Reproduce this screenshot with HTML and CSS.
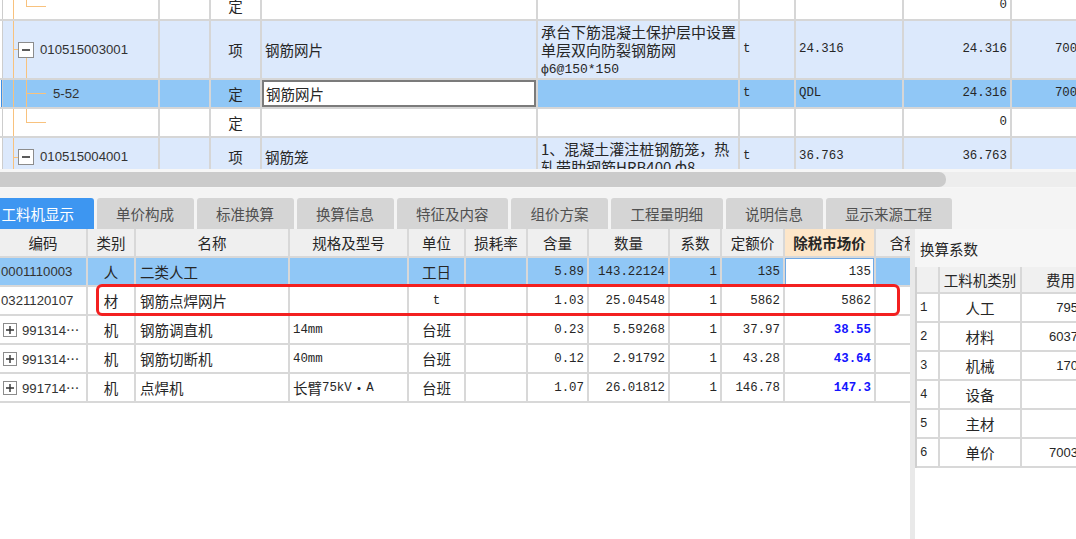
FILE: index.html
```html
<!DOCTYPE html>
<html lang="zh-CN">
<head>
<meta charset="utf-8">
<title>工料机显示</title>
<link rel="stylesheet" href="styles.css">
</head>
<body>
<div class="top-view">
  <div class="top-grid">
    <div class="trow">
      <div class="tc lead"></div>
      <div class="tc tree t-end1"></div>
      <div class="tc"></div>
      <div class="tc c">定</div>
      <div class="tc"></div>
      <div class="tc"></div>
      <div class="tc"></div>
      <div class="tc"></div>
      <div class="tc r num">0</div>
      <div class="tc"></div>
    </div>
    <div class="trow item tall">
      <div class="tc lead"></div>
      <div class="tc tree t-node">
        <svg class="box" width="16" height="16" viewBox="0 0 16 16"><rect x="0.5" y="0.5" width="15" height="15" fill="#fff" stroke="#8c8c8c"/><line x1="4" y1="8" x2="12" y2="8" stroke="#333" stroke-width="1.6"/></svg>
        <span class="code">010515003001</span>
      </div>
      <div class="tc"></div>
      <div class="tc c">项</div>
      <div class="tc">钢筋网片</div>
      <div class="tc desc">承台下筋混凝土保护层中设置<br>单层双向防裂钢筋网<br><span class="num small">ф6@150*150</span></div>
      <div class="tc num">t</div>
      <div class="tc num">24.316</div>
      <div class="tc r num">24.316</div>
      <div class="tc r num">7003.64</div>
    </div>
    <div class="trow sel">
      <div class="tc lead"></div>
      <div class="tc tree t-leaf"><span class="code">5-52</span></div>
      <div class="tc"></div>
      <div class="tc c">定</div>
      <div class="tc edit">钢筋网片</div>
      <div class="tc"></div>
      <div class="tc num">t</div>
      <div class="tc num">QDL</div>
      <div class="tc r num">24.316</div>
      <div class="tc r num">7003.64</div>
    </div>
    <div class="trow">
      <div class="tc lead"></div>
      <div class="tc tree t-last"></div>
      <div class="tc"></div>
      <div class="tc c">定</div>
      <div class="tc"></div>
      <div class="tc"></div>
      <div class="tc"></div>
      <div class="tc"></div>
      <div class="tc r num">0</div>
      <div class="tc"></div>
    </div>
    <div class="trow item mid">
      <div class="tc lead"></div>
      <div class="tc tree t-node2">
        <svg class="box" width="16" height="16" viewBox="0 0 16 16"><rect x="0.5" y="0.5" width="15" height="15" fill="#fff" stroke="#8c8c8c"/><line x1="4" y1="8" x2="12" y2="8" stroke="#333" stroke-width="1.6"/></svg>
        <span class="code">010515004001</span>
      </div>
      <div class="tc"></div>
      <div class="tc c">项</div>
      <div class="tc">钢筋笼</div>
      <div class="tc desc">1、混凝土灌注桩钢筋笼，热<br>轧带肋钢筋HRB400 ф8</div>
      <div class="tc num">t</div>
      <div class="tc num">36.763</div>
      <div class="tc r num">36.763</div>
      <div class="tc"></div>
    </div>
  </div>
</div>

<div class="hscroll"><div class="track"><div class="thumb"></div></div></div>

<div class="tabs">
  <div class="tab on">工料机显示</div>
  <div class="tab">单价构成</div>
  <div class="tab">标准换算</div>
  <div class="tab">换算信息</div>
  <div class="tab">特征及内容</div>
  <div class="tab">组价方案</div>
  <div class="tab">工程量明细</div>
  <div class="tab">说明信息</div>
  <div class="tab">显示来源工程</div>
</div>

<div class="lower">
  <div class="left-pane">
    <div class="lgrid">
      <div class="lrow head">
        <div class="lc c">编码</div>
        <div class="lc c">类别</div>
        <div class="lc c">名称</div>
        <div class="lc c">规格及型号</div>
        <div class="lc c">单位</div>
        <div class="lc c">损耗率</div>
        <div class="lc c">含量</div>
        <div class="lc c">数量</div>
        <div class="lc c">系数</div>
        <div class="lc c">定额价</div>
        <div class="lc c hl">除税市场价</div>
        <div class="lc c">含税市场价</div>
      </div>
      <div class="lrow sel">
        <div class="lc first"><span class="code">0001110003</span></div>
        <div class="lc c">人</div>
        <div class="lc name">二类人工</div>
        <div class="lc"></div>
        <div class="lc c">工日</div>
        <div class="lc"></div>
        <div class="lc r num">5.89</div>
        <div class="lc r num">143.22124</div>
        <div class="lc r num">1</div>
        <div class="lc r num">135</div>
        <div class="lc r num edit">135</div>
        <div class="lc"></div>
      </div>
      <div class="lrow">
        <div class="lc first"><span class="code">0321120107</span></div>
        <div class="lc c">材</div>
        <div class="lc name">钢筋点焊网片</div>
        <div class="lc"></div>
        <div class="lc c num">t</div>
        <div class="lc"></div>
        <div class="lc r num">1.03</div>
        <div class="lc r num">25.04548</div>
        <div class="lc r num">1</div>
        <div class="lc r num">5862</div>
        <div class="lc r num">5862</div>
        <div class="lc"></div>
      </div>
      <div class="lrow">
        <div class="lc plus"><svg class="pbox" width="14" height="14" viewBox="0 0 14 14"><rect x="0.5" y="0.5" width="13" height="13" fill="#fff" stroke="#8c8c8c"/><path d="M3 7H11M7 3V11" stroke="#333" stroke-width="1.4"/></svg><span class="code">991314⋯</span></div>
        <div class="lc c">机</div>
        <div class="lc name">钢筋调直机</div>
        <div class="lc num">14mm</div>
        <div class="lc c">台班</div>
        <div class="lc"></div>
        <div class="lc r num">0.23</div>
        <div class="lc r num">5.59268</div>
        <div class="lc r num">1</div>
        <div class="lc r num">37.97</div>
        <div class="lc r num blue">38.55</div>
        <div class="lc"></div>
      </div>
      <div class="lrow">
        <div class="lc plus"><svg class="pbox" width="14" height="14" viewBox="0 0 14 14"><rect x="0.5" y="0.5" width="13" height="13" fill="#fff" stroke="#8c8c8c"/><path d="M3 7H11M7 3V11" stroke="#333" stroke-width="1.4"/></svg><span class="code">991314⋯</span></div>
        <div class="lc c">机</div>
        <div class="lc name">钢筋切断机</div>
        <div class="lc num">40mm</div>
        <div class="lc c">台班</div>
        <div class="lc"></div>
        <div class="lc r num">0.12</div>
        <div class="lc r num">2.91792</div>
        <div class="lc r num">1</div>
        <div class="lc r num">43.28</div>
        <div class="lc r num blue">43.64</div>
        <div class="lc"></div>
      </div>
      <div class="lrow">
        <div class="lc plus"><svg class="pbox" width="14" height="14" viewBox="0 0 14 14"><rect x="0.5" y="0.5" width="13" height="13" fill="#fff" stroke="#8c8c8c"/><path d="M3 7H11M7 3V11" stroke="#333" stroke-width="1.4"/></svg><span class="code">991714⋯</span></div>
        <div class="lc c">机</div>
        <div class="lc name">点焊机</div>
        <div class="lc">长臂<span class="num">75kV</span>・<span class="num">A</span></div>
        <div class="lc c">台班</div>
        <div class="lc"></div>
        <div class="lc r num">1.07</div>
        <div class="lc r num">26.01812</div>
        <div class="lc r num">1</div>
        <div class="lc r num">146.78</div>
        <div class="lc r num blue">147.3</div>
        <div class="lc"></div>
      </div>
    </div>
    <div class="redbox"></div>
  </div>

  <div class="right-pane">
    <div class="rp-title">换算系数</div>
    <div class="rtable">
      <div class="rrow head">
        <div class="rc"></div>
        <div class="rc c">工料机类别</div>
        <div class="rc c">费用</div>
      </div>
      <div class="rrow"><div class="rc num">1</div><div class="rc c">人工</div><div class="rc r val">795.43</div></div>
      <div class="rrow"><div class="rc num">2</div><div class="rc c">材料</div><div class="rc r val">6037.26</div></div>
      <div class="rrow"><div class="rc num">3</div><div class="rc c">机械</div><div class="rc r val">170.95</div></div>
      <div class="rrow"><div class="rc num">4</div><div class="rc c">设备</div><div class="rc r val"></div></div>
      <div class="rrow"><div class="rc num">5</div><div class="rc c">主材</div><div class="rc r val"></div></div>
      <div class="rrow"><div class="rc num">6</div><div class="rc c">单价</div><div class="rc r val">7003.64</div></div>
    </div>
  </div>
</div>
</body>
</html>
```

FILE: styles.css
```css
* { box-sizing: border-box; }
html, body { margin: 0; padding: 0; }
body {
  width: 1076px;
  height: 539px;
  overflow: hidden;
  background: #fff;
  color: #262626;
  font-family: "Noto Sans CJK SC", "Liberation Sans", sans-serif;
  font-size: 14.5px;
}

.num { font-family: "Liberation Mono", "Noto Sans CJK SC", monospace; font-size: 12.4px; }
.num.small { font-size: 13px; }
.code { font-family: "Liberation Sans", "Noto Sans CJK SC", sans-serif; font-size: 13.2px; color: #333; }

/* ---------- top grid ---------- */
.top-view { height: 169px; overflow: hidden; }
.top-grid { margin-top: -8px; width: 1112px; }
.trow {
  display: grid;
  grid-template-columns: 3px 157px 51px 51px 276px 202px 56px 108px 108px 100px;
  height: 29px;
  border-bottom: 2px solid #d6d6d6;
  background: #fff;
}
.trow.tall { height: 59px; }
.trow.mid { height: 40px; }
.trow.item { background: #dce9fc; }
.trow.sel { background: #90c7f6; }

.tc {
  display: flex;
  align-items: center;
  padding: 0 3px;
  border-right: 2px solid #d6d6d6;
  white-space: nowrap;
  overflow: hidden;
  line-height: 17.5px;
}
.tc.c { justify-content: center; }
.tc.r { justify-content: flex-end; }
.tc.lead { padding: 0; border-right: 1px solid #cdcdcd; background: #fff; }
.trow.sel .tc.lead { background: linear-gradient(to right, #fff 1px, #3b8fe6 1px); }
.tc.desc { display: block; padding: 2px 1px 0 3px; font-size: 15px; }
.tc.edit { background: #fff; box-shadow: inset 0 0 0 2px #7b7b7b; padding-left: 4px; }

.tree { padding-left: 0; background-repeat: no-repeat; }
.tree .box { flex: none; }
.tree .code { margin-left: 6px; }
.t-end1 {
  background-image: linear-gradient(#f8c27e, #f8c27e), linear-gradient(#f8c27e, #f8c27e), linear-gradient(#f8c27e, #f8c27e);
  background-position: 10px 0, 23px 0, 23px 14px;
  background-size: 1px 100%, 1px 14px, 20px 1px;
}
.t-node {
  padding-left: 15px;
  background-image: linear-gradient(#f8c27e, #f8c27e), linear-gradient(#f8c27e, #f8c27e), linear-gradient(#f8c27e, #f8c27e);
  background-position: 10px 0, 10px 28px, 23px 36px;
  background-size: 1px 100%, 5px 1px, 1px 100%;
}
.t-leaf {
  padding-left: 50px;
  background-image: linear-gradient(#f8c27e, #f8c27e), linear-gradient(#f8c27e, #f8c27e), linear-gradient(#f8c27e, #f8c27e);
  background-position: 10px 0, 23px 0, 23px 13px;
  background-size: 1px 100%, 1px 100%, 20px 1px;
}
.t-leaf .code { margin-left: 0; }
.t-last {
  background-image: linear-gradient(#f8c27e, #f8c27e), linear-gradient(#f8c27e, #f8c27e), linear-gradient(#f8c27e, #f8c27e);
  background-position: 10px 0, 23px 0, 23px 13px;
  background-size: 1px 100%, 1px 13px, 20px 1px;
}
.t-node2 {
  padding-left: 15px;
  background-image: linear-gradient(#f8c27e, #f8c27e), linear-gradient(#f8c27e, #f8c27e);
  background-position: 10px 0, 10px 19px;
  background-size: 1px 100%, 5px 1px;
}

/* ---------- horizontal scrollbar ---------- */
.hscroll { height: 19px; padding: 3px 0 1px; background: #f6f6f6; }
.track { height: 15px; background: #ededed; overflow: hidden; }
.thumb { width: 956px; height: 15px; margin-left: -10px; background: #cbcbcb; border-radius: 7px; }

/* ---------- tabs ---------- */
.tabs {
  display: flex;
  gap: 3px;
  height: 41px;
  padding-top: 10px;
  margin-left: -18px;
  background: #f4f4f4;
}
.tab {
  height: 31px;
  padding: 0 19.5px;
  display: flex;
  align-items: center;
  background: #d5d5d5;
  color: #505050;
  border-radius: 3px 3px 0 0;
  white-space: nowrap;
  flex: none;
}
.tab.on { background: #3d96f1; color: #fff; }

/* ---------- lower area ---------- */
.lower { display: flex; height: 310px; }
.left-pane { width: 910px; flex: none; position: relative; overflow: hidden; }
.lgrid { width: 978px; }
.lrow {
  display: grid;
  grid-template-columns: 88px 48px 154px 119px 57px 62px 61px 81px 52px 63px 91px 102px;
  height: 29px;
  border-bottom: 2px solid #d8d8d8;
}
.lrow.head { background: #efefef; }
.lrow.sel { background: #90c7f6; }
.lc {
  display: flex;
  align-items: center;
  padding: 0 3px;
  border-right: 2px solid #d8d8d8;
  white-space: nowrap;
  overflow: hidden;
}
.lc.c { justify-content: center; }
.lc.r { justify-content: flex-end; }
.lc.first { padding-left: 1px; }
.lc.name { padding-left: 4px; }
.lc.plus { padding-left: 3px; gap: 5px; }
.lc.plus .pbox { flex: none; }
.lc.hl { background: #fde6c9; font-weight: bold; }
.lc.edit { background: #fff; box-shadow: inset 0 0 0 1px #6fa9e6; }
.blue { color: #1414ff; font-weight: bold; }

.redbox {
  position: absolute;
  left: 96px;
  top: 55px;
  width: 804px;
  height: 32px;
  border: 3px solid #f32020;
  border-radius: 6px;
}

/* ---------- right pane ---------- */
.right-pane { flex: 1; border-left: 5px solid #e9e9e9; overflow: hidden; }
.rp-title { height: 38px; background: #f6f6f6; display: flex; align-items: center; padding-left: 5px; }
.rtable { width: 186px; border-left: 2px solid #d0d0d0; }
.rrow {
  display: grid;
  grid-template-columns: 23px 82px 79px;
  height: 29px;
  border-bottom: 2px solid #d8d8d8;
  background: #fff;
}
.rrow.head { height: 27px; background: #f0f0f0; }
.rc {
  display: flex;
  align-items: center;
  padding: 0 3px;
  border-right: 2px solid #d8d8d8;
  white-space: nowrap;
  overflow: hidden;
}
.rc.c { justify-content: center; }
.rc.r { justify-content: flex-end; }
.rc.val { font-family: "Liberation Sans", sans-serif; font-size: 13px; }
```
